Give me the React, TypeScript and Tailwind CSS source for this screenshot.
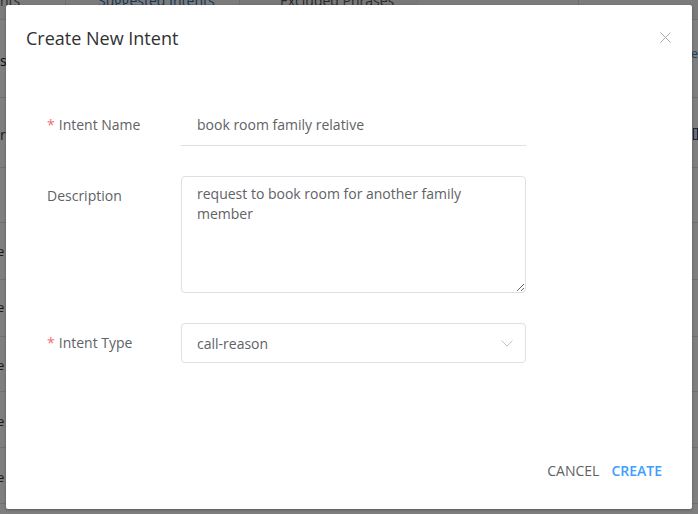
import React from "react";

function BgRow({ top }: { top: number }) {
  return <div className="border-b border-[#e0e0e0]" style={{ height: top }} />;
}

export default function App() {
  const rowHeights = [20, 78, 70, 55, 57, 57, 55, 56, 56, 20];
  return (
    <div
      className="relative w-[698px] h-[514px] overflow-hidden bg-white"
      style={{ fontFamily: "'Open Sans', 'Liberation Sans', sans-serif" }}
    >
      {/* background page */}
      <div className="flex flex-col">
        <div className="h-[20px] flex items-start border-b border-[#e0e0e0] bg-[#f7f7f7] text-[14px] leading-[14px] text-[#2b6cb0]">
          <div className="w-[66px] border-r border-[#ddd] h-full -mt-[6px] text-[#555] pl-[0px]">nts</div>
          <div className="w-[174px] border-r border-[#ddd] h-full -mt-[6px] pl-[32px]">Suggested Intents</div>
          <div className="w-[178px] h-full -mt-[6px] pl-[40px] bg-[#f0f0f0] text-[#555]">Excluded Phrases</div>
          <div className="w-[161px] border-r border-[#ddd] h-full" />
        </div>
        {rowHeights.slice(1).map((h, i) => (
          <BgRow key={i} top={h} />
        ))}
      </div>
      <div className="absolute left-0 top-[50px] text-[14px] text-[#111]">s</div>
      <div className="absolute left-0 top-[124px] text-[14px] text-[#333]">r</div>
      {[242, 298, 356, 412, 468].map((t) => (
        <div key={t} className="absolute left-[-3px] top-[0px] text-[13px] text-[#333]" style={{ top: t }}>
          e
        </div>
      ))}
      <div className="absolute right-[0px] top-[44px] text-[13px] text-[#4a7fb0]">e</div>
      <div className="absolute right-[0px] top-[128px] w-[5px] h-[12px] border border-[#446] bg-[#cfe0f0]" />

      {/* overlay */}
      <div className="absolute inset-0 bg-black/50" />

      {/* modal */}
      <div className="absolute left-[6px] top-[5px] w-[686px] h-[504px] bg-white rounded-[2px] shadow-[0_1px_3px_rgba(0,0,0,0.3)] flex flex-col">
        <div className="flex items-center justify-between pl-[20px] pr-[21px] pt-[21px]">
          <h2 className="text-[18px] leading-[24px] text-[#303133]">Create New Intent</h2>
          <svg width="11" height="11" viewBox="0 0 11 11" className="-mt-[1px]">
            <path d="M0.5 0.5 L10.5 10.5 M10.5 0.5 L0.5 10.5" stroke="#a8abb2" strokeWidth="1" />
          </svg>
        </div>

        <div className="flex flex-col pl-[41px] pt-[55px] gap-[30px]">
          {/* Intent Name */}
          <div className="flex">
            <label className="w-[134px] h-[40px] leading-[40px] text-[14px] text-[#606266]">
              <span className="text-[#f56c6c] mr-[4px]">*</span>Intent Name
            </label>
            <div className="w-[345px] h-[41px] border-b border-[#dcdfe6] pl-[16px] text-[14px] leading-[40px] text-[#606266]">
              book room family relative
            </div>
          </div>

          {/* Description */}
          <div className="flex">
            <label className="w-[134px] h-[40px] leading-[40px] text-[14px] text-[#606266]">Description</label>
            <textarea
              readOnly
              defaultValue="request to book room for another family member"
              className="w-[345px] h-[117px] border border-[#dcdfe6] rounded-[4px] pl-[15px] pr-[15px] pt-[7px] text-[14px] leading-[20px] text-[#606266] outline-none"
              style={{ fontFamily: "'Open Sans', 'Liberation Sans', sans-serif" }}
            />
          </div>

          {/* Intent Type */}
          <div className="flex">
            <label className="w-[134px] h-[40px] leading-[40px] text-[14px] text-[#606266]">
              <span className="text-[#f56c6c] mr-[4px]">*</span>Intent Type
            </label>
            <div className="w-[345px] h-[40px] border border-[#dcdfe6] rounded-[4px] pl-[15px] pr-[12px] flex items-center justify-between text-[14px] text-[#606266]">
              <span>call-reason</span>
              <svg width="12" height="7" viewBox="0 0 12 7">
                <path d="M0.5 0.5 L6 6 L11.5 0.5" stroke="#c0c4cc" strokeWidth="1" fill="none" />
              </svg>
            </div>
          </div>
        </div>

        <div className="mt-auto flex justify-end items-center gap-[12px] pr-[30px] pb-[28px] text-[14px] leading-[20px]">
          <button className="text-[#606266]">CANCEL</button>
          <button className="text-[#409eff] font-semibold">CREATE</button>
        </div>
      </div>
    </div>
  );
}
